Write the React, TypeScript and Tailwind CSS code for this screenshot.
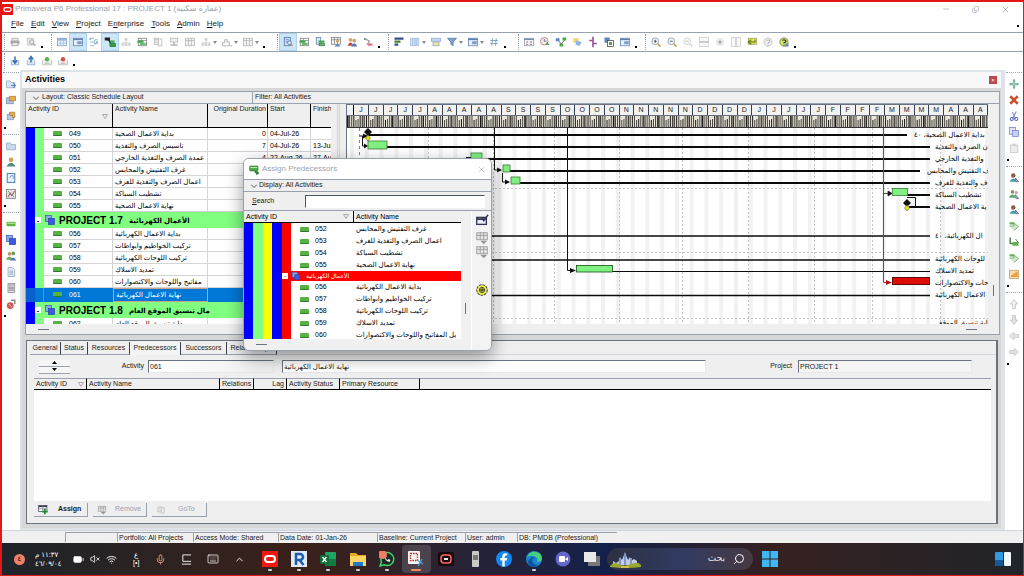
import React from "react";
import { Minus, Copy, X, Wifi, Mic, ChevronUp, Search, VolumeX, Battery, Keyboard } from "lucide-react";

const ink = "#5f7fae";

const glyphs: Record<string, React.ReactNode> = {
  printer: (<><rect x="4" y="3" width="8" height="4" fill="#eee" stroke="#aaa" /><rect x="2" y="6" width="12" height="5" rx="1" fill="#aaa" /><rect x="4" y="9" width="8" height="4" fill="#eee" stroke="#999" /></>),
  preview: (<><rect x="3" y="3" width="8" height="9" fill="#ececec" stroke="#bbb" /><circle cx="9" cy="8" r="3" fill="#dce6f0" stroke="#999" /><path d="M11 10l3 3" stroke="#aaa" strokeWidth="2" /></>),
  grid: (<><rect x="2" y="3" width="12" height="10" fill="#e6f0fb" stroke="#7d9dc4" /><path d="M2 6h12M2 9.500h12M6 3v10M10 3v10" stroke="#a4bddc" /><path d="M2 4h12" stroke="#86a9d6" strokeWidth="2" /></>),
  panel: (<><rect x="2" y="3" width="12" height="10" fill="#e8f1fb" stroke={ink} /><path d="M2 4.500h12" stroke={ink} strokeWidth="2" /><rect x="7" y="7" width="6" height="4" fill="#7b9cc9" /></>),
  network: (<><path d="M3 3h5M3 8h5M3 13h5M9 5v7M9 5h4M9 10h4" stroke="#7c9cc0" fill="none" /><circle cx="3" cy="4" r="1.500" fill="#8fb1d7" /><circle cx="12" cy="8" r="1.500" fill="#8fb1d7" /></>),
  link: (<><rect x="1" y="2" width="7" height="4" fill="#222" /><path d="M4 4q3 1 5 6" stroke="#222" strokeWidth="2" fill="none" /><rect x="8" y="6" width="6" height="3" fill="#39a145" /><rect x="8" y="10" width="7" height="4" fill="#39a145" stroke="#1d6c29" /></>),
  assign: (<><rect x="1" y="3" width="12" height="7" rx="1" fill="#4cae45" stroke="#27732a" /><path d="M2 5h10" stroke="#b5e6ad" strokeWidth="1.500" /><path d="M9 9v4h3M11 10.500l3.500 2.500-3.500 2.500z" fill="#27732a" stroke="#27732a" /></>),
  assignrow: (<><rect x="1" y="2" width="12" height="9" fill="#fff" stroke="#335" /><path d="M1 3.500h12" stroke="#335" strokeWidth="2" /><path d="M1 7h12M7 3v8" stroke="#777" /><path d="M10 7v8M6 11h8" stroke="#1f8a2c" strokeWidth="2.500" /></>),
  tree: (<><rect x="6" y="3" width="4" height="3" fill="#ccc" /><path d="M8 6v3M3 11V9h10v2" stroke="#c4c4c4" fill="none" /><rect x="2" y="10" width="3" height="3" fill="#ccc" /><rect x="6" y="10" width="4" height="3" fill="#ccc" /><rect x="11" y="10" width="3" height="3" fill="#ccc" /></>),
  sheetgreen: (<><rect x="3" y="3" width="11" height="10" fill="#fff" stroke="#777" /><path d="M3 6h11M7 3v10" stroke="#888" /><rect x="2" y="6" width="8" height="3" fill="#3fa34a" /><rect x="5" y="9" width="8" height="3" fill="#69bf6f" /></>),
  pages: (<><rect x="3" y="3" width="6" height="8" fill="#f2f2f2" stroke="#b0b0b0" /><path d="M10 4h3v9H7" stroke="#b0b0b0" fill="none" /><path d="M4 5h4M4 8h4" stroke="#b5b5b5" /></>),
  pagesgreen: (<><rect x="3" y="2" width="6" height="9" fill="#dce9f7" stroke={ink} /><rect x="6" y="6" width="8" height="3" fill="#43a44d" /><rect x="7" y="10" width="7" height="3" fill="#66bc6c" stroke="#37803e" /></>),
  greybox: (<><rect x="3" y="3" width="10" height="5" fill="#eee" stroke="#b5b5b5" /><path d="M8 8v5M3 12h10" stroke="#b5b5b5" strokeWidth="2" /></>),
  greygrid: (<><rect x="2" y="3" width="12" height="10" fill="#f2f2f2" stroke="#b5b5b5" /><path d="M2 6h12M6 3v10M10 3v10" stroke="#b5b5b5" /></>),
  dropgrid: (<><rect x="2" y="2" width="12" height="8" fill="#e6e6e6" stroke="#999" /><path d="M2 5h12M6 2v8M10 2v8" stroke="#999" /><path d="M6 11h8l-4 4z" fill="#999" /></>),
  histogram: (<path d="M2 13V9h3V5h3v3h3v5M1 13h14" stroke="#bbb" strokeWidth="1.500" fill="none" />),
  finddoc: (<><rect x="3" y="2" width="8" height="11" fill="#cfe0f5" stroke="#4a6ea5" /><path d="M5 5h4M5 8h3" stroke="#4a6ea5" /><circle cx="10" cy="9" r="2.500" fill="#eaf3ff" stroke="#41618d" /><path d="M12 11l2 2" stroke="#c09a4e" strokeWidth="2" /></>),
  gridpeople: (<><rect x="2" y="2" width="12" height="9" fill="#fff" stroke="#777" /><path d="M2 5h12M6 2v9M10 2v9" stroke="#777" /><circle cx="10" cy="7" r="2" fill="#d89b55" /><path d="M6 14q4-7 8 0z" fill="#5c86c0" /></>),
  people: (<><circle cx="6" cy="5" r="2.500" fill="#d5a36a" /><path d="M2 13q4-9 8 0z" fill="#c9483d" /><circle cx="11" cy="6" r="2.500" fill="#caa06f" /><path d="M7 14q4-9 8 0z" fill="#4b79b9" /></>),
  role: (<><circle cx="6" cy="5" r="2.500" fill="#b99a6a" /><circle cx="11" cy="4.500" r="2.500" fill="#6c9c55" /><path d="M1 13q5-9 9 0z" fill="#74a85c" /><path d="M6 14q5-8 9 0z" fill="#4b79b9" /></>),
  flow: (<><path d="M3 3l7 4-3 4h5" stroke="#8b9aa8" fill="none" strokeWidth="1.500" /><rect x="8" y="10" width="6" height="3" fill="#d77" /><circle cx="4" cy="4" r="1.500" fill="#6a6" /></>),
  bars: (<><rect x="2" y="2" width="12" height="3" fill="#34548a" /><rect x="2" y="6" width="8" height="3" fill="#50802f" /><rect x="2" y="10" width="5" height="3" fill="#34548a" /></>),
  columns: (<><rect x="2" y="3" width="11" height="10" fill="#dceafa" stroke="#a3bcdc" /><path d="M5 3v10M8 3v10M10.500 3v10" stroke="#89a7cd" /></>),
  group: (<><rect x="2" y="3" width="12" height="4" fill="#c7d9f0" stroke="#89a7cd" /><rect x="4" y="8" width="8" height="5" fill="#f7e2a0" stroke="#89a7cd" /></>),
  filter: (<path d="M2 3h12L9.500 8v5L6.500 11V8z" fill="#7ba3d6" stroke="#56799f" />),
  hash: (<path d="M6 3L5 13M11 3l-1 10M3 6h10M3 10h10" stroke="#7b9cc9" strokeWidth="1.200" />),
  cells: (<><rect x="2" y="3" width="12" height="10" fill="#fff" stroke="#8895a8" /><path d="M2 4.500h12" stroke="#7289b0" strokeWidth="2" /><path d="M4 8h3M9 8h3M4 11h3M9 11h3" stroke="#a56a80" strokeWidth="1.500" /></>),
  clock: (<><circle cx="7" cy="7" r="5" fill="#fbeef0" stroke="#b66a7a" /><path d="M7 4v3h3" stroke="#555" fill="none" /><path d="M8 12h6l-3-4z" fill="#4da552" /></>),
  nodes: (<><path d="M4 5l4 6 5-6" stroke="#555" fill="none" /><rect x="1" y="3" width="5" height="4" fill="#5c86c0" /><rect x="10" y="2" width="5" height="4" fill="#4da552" /><rect x="6" y="10" width="5" height="4" fill="#4da552" /></>),
  star: (<><rect x="3" y="3" width="7" height="6" fill="#f0d36a" /><path d="M7 6l7 2-2 5-6-1z" fill="#8fb4e0" /></>),
  trace: (<><path d="M8 1v14" stroke="#7b4aa0" strokeWidth="2" /><path d="M3 6h5M8 10h5" stroke="#b0418a" strokeWidth="2" /></>),
  stack: (<><rect x="2" y="2" width="7" height="7" fill="#5c86c0" /><rect x="6" y="6" width="8" height="8" fill="#fff" stroke="#444" /><rect x="8" y="8" width="4" height="4" fill="#4da552" /></>),
  zoomin: (<><circle cx="7" cy="7" r="4.500" fill="#f3f7fb" stroke="#7c8ea3" /><path d="M5 7h4M7 5v4" stroke="#333" /><path d="M10.500 10.500L14 14" stroke="#d8a957" strokeWidth="2.500" /></>),
  zoomout: (<><circle cx="7" cy="7" r="4.500" fill="#f3f7fb" stroke="#7c8ea3" /><path d="M5 7h4" stroke="#333" /><path d="M10.500 10.500L14 14" stroke="#d8a957" strokeWidth="2.500" /></>),
  zoomgrey: (<><circle cx="7" cy="7" r="4.500" fill="#f5f5f5" stroke="#ccc" /><path d="M5 7h4M10.500 10.500L14 14" stroke="#ccc" strokeWidth="1.500" /></>),
  split: (<><rect x="2" y="2" width="12" height="12" fill="#f8f8f8" stroke="#ccc" /><path d="M2 8h12" stroke="#aaa" strokeWidth="1.500" /></>),
  dotgrey: (<><circle cx="8" cy="8" r="5" fill="#e5e5e5" /><circle cx="8" cy="8" r="2" fill="#aaa" /></>),
  splitv: (<><rect x="2" y="2" width="12" height="12" fill="#f8f8f8" stroke="#ccc" /><path d="M8 2v12" stroke="#bbb" strokeWidth="1.500" /></>),
  back: (<><rect x="3" y="3" width="11" height="8" fill="#d7e06a" stroke="#9aa33c" /><path d="M12 5v3H4M7 5L3 8l4 3" stroke="#6b7a1c" strokeWidth="1.500" fill="none" /></>),
  helpgrey: (<><circle cx="8" cy="8" r="5.500" fill="#eee" stroke="#bbb" /><path d="M6 6q2-2 4 0t-2 3v1M8 11.500v1" stroke="#999" fill="none" /></>),
  help: (<><circle cx="8" cy="8" r="5.500" fill="#dfe85a" stroke="#4d6b50" /><path d="M6 6q2-2 4 0t-2 3v1M8 11.500v1" stroke="#224" strokeWidth="1.500" fill="none" /><path d="M10 10h4v4h-4z" fill="#5c86c0" /></>),
  helpyellow: (<><circle cx="8" cy="8" r="6" fill="#f1f04a" stroke="#444" strokeWidth="1.200" strokeDasharray="3 1" /><circle cx="8" cy="8" r="3" fill="none" stroke="#333" /><path d="M5 8h6M8 6v4" stroke="#222" strokeWidth="1.200" /></>),
  importb: (<><path d="M3 7v6h10V7" fill="#dbe7f4" stroke="#8aa4c4" /><path d="M8 2v8M5 7l3 4 3-4" stroke="#3a6fb7" strokeWidth="2" fill="none" /></>),
  exportb: (<><path d="M3 7v6h10V7" fill="#dbe7f4" stroke="#8aa4c4" /><path d="M8 10V2M5 6l3-4 3 4" stroke="#3a6fb7" strokeWidth="2" fill="none" /></>),
  importg: (<><path d="M2 7v6h12V7" fill="#eee" stroke="#b5b5b5" /><circle cx="8" cy="5.500" r="3" fill="#5fae50" /><path d="M5 11h6" stroke="#8ab57f" /></>),
  exportr: (<><path d="M2 7v6h12V7" fill="#eee" stroke="#b5b5b5" /><circle cx="8" cy="5.500" r="3" fill="#cf5548" /><path d="M5 11h6" stroke="#c98c80" /></>),
  folder: (<path d="M2 4h5l1 2h6v7H2z" fill="#c9d8ec" stroke="#92a9c8" />),
  folderadd: (<><path d="M2 4h5l1 2h5v7H2z" fill="#dbe5f2" stroke="#92a9c8" /><path d="M8 10h6M11 7l3 3-3 3" stroke="#5c86c0" fill="none" strokeWidth="1.500" /></>),
  book: (<><rect x="2" y="5" width="9" height="8" fill="#aebfda" stroke="#7e93b5" /><rect x="6" y="3" width="8" height="6" fill="#e9a94f" stroke="#b77f33" /></>),
  report: (<><rect x="3" y="6" width="8" height="7" fill="#b9c9df" stroke="#7e93b5" /><path d="M6 3h7v7h-3V7H6z" fill="#e3b05d" stroke="#a6762c" /></>),
  user: (<><circle cx="8" cy="5" r="3" fill="#dc9a4a" /><path d="M2 14q6-10 12 0z" fill="#4f8a7c" /></>),
  notebook: (<><rect x="3" y="2" width="10" height="12" fill="#e9f2fc" stroke="#5b88bf" strokeWidth="1.500" /><path d="M6 8l2-3h3v4" stroke="#5b88bf" fill="none" /></>),
  chart: (<><rect x="2" y="2" width="12" height="12" fill="#e4e4e4" stroke="#777" /><path d="M4 12l3-5 2 3 4-6" stroke="#b35a5a" fill="none" strokeWidth="1.500" /><path d="M4 4l8 8" stroke="#777" /></>),
  activity: (<><rect x="2" y="5" width="12" height="6" rx="1" fill="#63b23f" /><rect x="3" y="6" width="10" height="2" fill="#a7dc8a" /></>),
  wbs: (<><rect x="2" y="2" width="8" height="8" fill="#8fa9e6" stroke="#3d5cb8" /><rect x="6" y="6" width="8" height="8" fill="#3a5be0" stroke="#2c47a8" /></>),
  page: (<><path d="M4 2h6l3 3v9H4z" fill="#dfe8f3" stroke="#8ea4c1" /><path d="M6 7h5M6 9h5M6 11h5" stroke="#8ea4c1" /></>),
  calc: (<><rect x="4" y="2" width="9" height="12" fill="#e2e2ea" stroke="#888" /><path d="M5 4h7M5 7h7M5 9h7M5 11h7" stroke="#777" /></>),
  risk: (<><circle cx="7" cy="10" r="4.500" fill="#cc5a52" /><path d="M8 3h5v5" stroke="#888" strokeWidth="2" fill="none" /><path d="M5 8l4 4" stroke="#fff" /></>),
  plus: (<><path d="M8 2v12M2 8h12" stroke="#5aa08b" strokeWidth="3" /><path d="M8 3v10M3 8h10" stroke="#cfe6df" /></>),
  delete: (<path d="M3 3l10 10M13 3L3 13" stroke="#c8502e" strokeWidth="3.500" />),
  cut: (<><path d="M6 12L11 2M10 12L6 3" stroke="#7f8fd0" strokeWidth="1.500" /><circle cx="5" cy="12" r="2" fill="none" stroke="#5d6fc4" strokeWidth="1.500" /><circle cx="11" cy="12" r="2" fill="none" stroke="#5d6fc4" strokeWidth="1.500" /></>),
  copy: (<><rect x="2" y="2" width="8" height="9" fill="#dbe2fa" stroke="#7485cf" /><rect x="6" y="6" width="8" height="8" fill="#c6d1f5" stroke="#7485cf" /></>),
  paste: (<><rect x="3" y="4" width="10" height="10" fill="#ececec" stroke="#c5c5c5" /><rect x="6" y="2" width="4" height="3" fill="#ccc" /></>),
  userassign: (<><circle cx="7" cy="4.500" r="3" fill="#8a5f45" /><path d="M2 13q5-9 10 0z" fill="#3d9db0" /><path d="M10 8l4 5h-3z" fill="#fff" stroke="#446" /></>),
  usergreen: (<><circle cx="6" cy="5" r="2.500" fill="#9b8b6f" /><path d="M1 13q5-9 10 0z" fill="#59a868" /><circle cx="11" cy="6" r="2" fill="#c4a0a8" /><path d="M10 9l4 5h-3z" fill="#fff" stroke="#446" /></>),
  pred: (<><path d="M2 8h6V4l6 5-6 5" fill="#cfe8c9" stroke="#5aa050" /><path d="M2 3h6v3H2z" fill="#5fb04f" /></>),
  succ: (<><path d="M3 2v8h8" stroke="#4c8b45" strokeWidth="2" fill="none" /><rect x="6" y="8" width="8" height="5" fill="#5fb04f" /><path d="M10 4l4 5" stroke="#446" /></>),
  steps: (<><rect x="2" y="3" width="12" height="11" fill="#f6ddb8" stroke="#c79a62" /><path d="M4 12v-3h3V7h3V5h3v7z" fill="#f0a040" /></>),
  up: (<path d="M8 2l5 6h-3v6H6V8H3z" fill="#f2f2f2" stroke="#bcbcbc" />),
  down: (<path d="M8 14l5-6h-3V2H6v6H3z" fill="#e2e6e2" stroke="#bcbcbc" />),
  left: (<path d="M2 8l6-5v3h6v4H8v3z" fill="#dfe3df" stroke="#c4c4c4" />),
  right: (<path d="M14 8L8 3v3H2v4h6v3z" fill="#dfe3df" stroke="#c4c4c4" />),
  assignbox: (<><rect x="2" y="5" width="11" height="8" fill="#eef" stroke="#335" strokeWidth="1.500" /><path d="M2 7h10" stroke="#335" strokeWidth="2" /><path d="M8 6l2 3 5-7" stroke="#335" strokeWidth="1.500" fill="none" /></>),
};

function Glyph({ name, className = "size-3" }: { name: string; className?: string }) {
  return (
    <svg viewBox="0 0 16 16" className={className} aria-hidden="true">
      {glyphs[name]}
    </svg>
  );
}

function Tool({ name, active, menu }: { name: string; active?: boolean; menu?: boolean }) {
  return (
    <button
      aria-label={name}
      className={`flex h-4 shrink-0 items-center justify-center ${menu ? "w-[21px]" : "w-4"} ${active ? "bg-[#cde6f7] outline outline-[#a9d3ef]" : ""}`}
    >
      <Glyph name={name} />
      {menu && <svg viewBox="0 0 4 3" className="ml-px h-[3px] w-1"><path d="M0 0h4L2 3z" fill="#888" /></svg>}
    </button>
  );
}

const toolGroups: { end: string; items: [string, string?][] }[] = [
  { end: "w-3", items: [["printer"], ["preview"]] },
  { end: "w-4", items: [["grid"], ["panel", "on"], ["network"], ["link", "on"], ["tree"], ["sheetgreen"], ["pages"], ["greybox"], ["greygrid"], ["tree", "menu"], ["histogram", "menu"], ["greygrid", "menu"]] },
  { end: "w-3", items: [["finddoc", "on"], ["sheetgreen"], ["pagesgreen"], ["gridpeople"], ["people"], ["flow"]] },
  { end: "w-4", items: [["bars"], ["columns", "menu"], ["group"], ["filter", "menu"], ["panel", "menu"], ["hash"]] },
  { end: "w-3", items: [["cells"], ["clock"], ["nodes"], ["star"], ["trace"], ["stack"], ["panel"]] },
  { end: "w-3", items: [["zoomin"], ["zoomout"], ["zoomgrey"], ["split"], ["dotgrey"], ["splitv"], ["back"], ["helpgrey"], ["help"]] },
];

const leftTools = [
  ["folderadd", "book", "report"],
  ["folder", "user", "notebook", "chart"],
  ["activity", "wbs", "role", "page", "calc", "risk"],
];
const rightTools = [
  ["plus", "delete", "cut", "copy", "paste"],
  ["userassign", "usergreen", "userassign", "pred", "succ", "pred", "steps"],
  ["up", "down", "left", "right"],
];

function SideBar({ groups, label }: { groups: string[][]; label: string }) {
  return (
    <nav aria-label={label} className="flex w-[18px] shrink-0 flex-col bg-white">
      {groups.map((g, i) => (
        <div key={i} className="flex flex-col items-center pt-[2px]">
          <span className="w-4 border-t border-dotted border-gray-400" />
          <div className="flex flex-col items-center pt-[3px]">
            {g.map((n, j) => (
              <button key={j} aria-label={n} className="flex size-4 items-center justify-center"><Glyph name={n} /></button>
            ))}
          </div>
          <span className="my-[3px] mr-3 size-[2px] bg-black" />
        </div>
      ))}
    </nav>
  );
}

type Row = { id: string; name: string; dur?: string; start?: string; finish?: string };
const rowsA: Row[] = [
  { id: "049", name: "بداية الاعمال الصحية", dur: "0", start: "04-Jul-26" },
  { id: "050", name: "تاسيس الصرف والتغذية", dur: "7", start: "04-Jul-26", finish: "13-Jul-26" },
  { id: "051", name: "عمدة الصرف والتغذية الخارجي", dur: "4", start: "22-Aug-26", finish: "27-Aug-26" },
  { id: "052", name: "غرف التفتيش والمحابس" },
  { id: "053", name: "اعمال الصرف والتغذية للغرف" },
  { id: "054", name: "تشطيب السباكة" },
  { id: "055", name: "نهاية الاعمال الصحية" },
];
const rowsB: Row[] = [
  { id: "056", name: "بداية الاعمال الكهربائية" },
  { id: "057", name: "تركيب الخواطيم وابواطات" },
  { id: "058", name: "تركيب اللوحات الكهربائية" },
  { id: "059", name: "تمديد الاسلاك" },
  { id: "060", name: "مفاتيح واللوحات والاكتصوارات" },
];

function Bar() {
  return <span className="h-[5px] w-[9px] shrink-0 rounded-[1px] border-b border-[#2f7a26] bg-[#58b144]" />;
}

function ActivityRow({ row, selected }: { row: Row; selected?: boolean }) {
  const line = selected ? "border-[#0078d7]" : "border-[#d4d4d4]";
  return (
    <tr className={selected ? "h-[14px] bg-[#0078d7] text-white" : "h-3 bg-white text-black"}>
      <td className={selected ? "bg-[#0a5fd0]" : "bg-[#0000ff]"} />
      <td className={selected ? "border-r border-[#3d9be6] bg-[#0078d7]" : "bg-[#80ff80]"} />
      <td className={`border-r border-b ${line}`}>
        <div className="flex items-center gap-[7px] pl-[9px]"><Bar />{row.id}</div>
      </td>
      <td className={`overflow-hidden border-r border-b pl-[2px] ${selected ? "border border-[#d0a080]" : line}`}>{row.name}</td>
      <td className={`border-r border-b pr-px text-right ${line}`}>{row.dur}</td>
      <td className={`border-r border-b pl-[2px] ${line}`}>{row.start}</td>
      <td className={`overflow-hidden border-b pl-[2px] ${line}`}>{row.finish}</td>
    </tr>
  );
}

function GroupRow({ code, name }: { code: string; name: string }) {
  return (
    <tr className="h-4 bg-[#80ff80] text-black">
      <td className="bg-[#0000ff]" />
      <td colSpan={6}>
        <div className="flex items-center text-[10px] leading-[15px] font-bold whitespace-pre">
          <span className="flex size-[6px] items-center justify-center bg-white text-[7px] leading-none">-</span>
          <Glyph name="wbs" className="mx-[3px] size-3" />
          {code}
          <span className="ml-[6px] text-[7px]">{name}</span>
        </div>
      </td>
    </tr>
  );
}

const weeks = "JJJJJAAAAASSSSOOOONNNNNDDDDJJJJJFFFFMMMMAAA".split("");

const chartLines: [number, number, number, number][] = [
  [367, 135, 906, 2], [386, 147, 929, 2], [481, 159, 929, 2], [508, 171, 919, 2], [519, 183, 929, 2],
  [906, 195, 929, 2], [908, 207, 929, 2], [346, 236, 929, 1.5], [346, 260, 929, 1.5], [611, 271.5, 929, 1], [346, 295.5, 929, 1.5],
];
const chartLabels: [number, number, string][] = [
  [913, 137, "بداية الاعمال الصحية، ٤٠"],
  [934, 149, "ن الصرف والتغذية"],
  [934, 161, "والتغذية الخارجي"],
  [926, 173, "رف التفتيش والمحابس"],
  [934, 185, "ف والتغذية للغرف"],
  [934, 197, "تشطيب السباكة"],
  [934, 209, "ية الاعمال الصحية"],
  [934, 238, "ال الكهربائية، ٤٠"],
  [934, 261, "للوحات الكهربائية"],
  [934, 273, "تمديد الاسلاك"],
  [934, 285, "حات والاكتصوارات"],
  [934, 297, "الاعمال الكهربائية"],
  [938, 325, "بداية تنسيق الموقع"],
];

function Gantt() {
  return (
    <div className="flex min-w-0 flex-1 flex-col overflow-hidden border-l border-gray-500 bg-white">
      <div className="flex h-3 items-stretch border-y border-gray-500 bg-[#f2f2f2] text-[7px] leading-[10px]">
        <span className="w-[7px] border-r border-black" />
        {weeks.map((w, i) => (
          <span key={i} className="min-w-0 flex-1 border-r border-gray-700 text-center">{w}</span>
        ))}
      </div>
      <svg viewBox="0 0 641 12" preserveAspectRatio="none" className="h-3 w-full shrink-0 bg-[#e9e5da]" aria-hidden="true">
        {Array.from({ length: 304 }, (_, i) => (
          <rect key={i} x={i * 2.11} y={i % 7 === 4 ? 4 : i % 7 === 5 ? 3 : 0} width={i % 7 === 0 ? 1.6 : 1} height="12" fill={i % 3 === 0 ? "#1a1a1a" : "#4a453f"} />
        ))}
        <path d="M0 11.500h641" stroke="#333" />
      </svg>
      <svg viewBox="346 128 641 196" className="w-full" role="img" aria-label="Gantt chart">
        {Array.from({ length: 44 }, (_, i) => (
          <rect key={i} x={349 + i * 14.77} y="128" width="4" height="196" fill="#f2f2f2" />
        ))}
        <g stroke="#c4c4c4" strokeDasharray="2 2" fill="none">
          <path d="M346 188.500H987M346 252.500H987M346 318.500H987" />
          <path d="M427.500 128V324M492.500 128V324M553.500 128V324M618.500 128V324M681.500 128V324M747.500 128V324M813.500 128V324M871.500 128V324M939.500 128V324" />
        </g>
        <path d="M358.500 128V324" stroke="#e06060" strokeDasharray="3 3" />
        {chartLines.map(([x, y, x2, h], i) => (
          <path key={i} d={`M${x} ${y}H${x2}`} stroke="#0a0a0a" strokeWidth={h} />
        ))}
        <g stroke="#111" fill="none">
          <path d="M493.500 128V170H500M501.500 173V182H508M566.500 128V270.500H574" />
          <path d="M359 136H366M361.500 136V146H366M906 197.500H914.500V207.500H909M470 157.500H465" />
        </g>
        <g fill="#111">
          <path d="M496 167.500v5l5-2.500zM504 179.500v5l5-2.500zM569 268v5l6-2.500zM363 143.500v5l4-2.500zM362 133.500v5l5-2.500z" />
          <path d="M367 128l4 4-4 4-4-4zM906 199l4 4-4 4-4-4z" />
        </g>
        <path d="M367 135l2.500 3-2.500 3-2.500-3zM906 205l2.500 3-2.500 3-2.500-3z" fill="#e6e600" stroke="#555" strokeWidth=".6" />
        <g fill="#80f080" stroke="#3b7a35" strokeWidth=".8">
          <rect x="367" y="141" width="19" height="8" />
          <rect x="470" y="153" width="11" height="8" />
          <rect x="502" y="165" width="7" height="7" />
          <rect x="510" y="177" width="9" height="7" />
          <rect x="575.500" y="265.500" width="36" height="6.500" stroke="#174d17" />
          <rect x="891.500" y="188.500" width="15" height="7" />
        </g>
        <path d="M882.500 128V282.500H887" stroke="#d02030" fill="none" />
        <path d="M885 280v5l6-2.500z" fill="#b01020" />
        <path d="M883 193.500H889M887 191v5l4-2.500z" stroke="#222" strokeWidth=".8" />
        <rect x="891.500" y="277.500" width="37" height="7" fill="#dd0c06" stroke="#5c0a06" />
        {chartLabels.map(([x, y, t], i) => (
          <text key={i} x={x} y={y} className="text-[7px]" fill="#000">{t}</text>
        ))}
      </svg>
    </div>
  );
}

function Sort() {
  return <svg viewBox="0 0 6 5" className="h-[5px] w-[6px]"><path d="M.5.500h5L3 4.500z" fill="none" stroke="#aaa" /></svg>;
}

function ActivitiesTable() {
  const th = "border-r border-b border-black pl-[2px] text-left align-top font-normal";
  return (
    <table className="w-[305px] shrink-0 table-fixed border-separate border-spacing-0 text-[7px] leading-[10px] whitespace-nowrap">
      <colgroup>
        <col className="w-[9px]" /><col className="w-[9px]" /><col className="w-[69px]" /><col className="w-[95px]" /><col className="w-[60px]" /><col className="w-[43px]" /><col className="w-5" />
      </colgroup>
      <thead>
        <tr className="h-6 bg-[#efefef]">
          <th colSpan={3} className={th}><div>Activity ID</div><div className="flex justify-end pr-1"><Sort /></div></th>
          <th className={th}>Activity Name</th>
          <th className="border-r border-b border-black pr-px text-right align-top font-normal">Original Duration</th>
          <th className={th}>Start</th>
          <th className="overflow-hidden border-b border-black pl-[2px] text-left align-top font-normal">Finish</th>
        </tr>
      </thead>
      <tbody>
        {rowsA.map((r) => <ActivityRow key={r.id} row={r} />)}
        <GroupRow code="PROJECT 1.7" name="الأعمال الكهربائية" />
        {rowsB.map((r) => <ActivityRow key={r.id} row={r} />)}
        <ActivityRow row={{ id: "061", name: "نهاية الاعمال الكهربائية" }} selected />
        <GroupRow code="PROJECT 1.8" name="مال تنسيق الموقع العام" />
        <ActivityRow row={{ id: "062", name: "بداية تنسيق الموقع العام" }} />
      </tbody>
    </table>
  );
}

const dialogRows: Row[] = [
  { id: "052", name: "غرف التفتيش والمحابس" },
  { id: "053", name: "اعمال الصرف والتغذية للغرف" },
  { id: "054", name: "تشطيب السباكة" },
  { id: "055", name: "نهاية الاعمال الصحية" },
  { id: "", name: "الأعمال الكهربائية" },
  { id: "056", name: "بداية الاعمال الكهربائية" },
  { id: "057", name: "تركيب الخواطيم وابواطات" },
  { id: "058", name: "تركيب اللوحات الكهربائية" },
  { id: "059", name: "تمديد الاسلاك" },
  { id: "060", name: "يل المفاتيح واللوحات والاكتصوارات" },
];

function Strips() {
  return (
    <>
      <td className="bg-[#0000ff]" /><td className="bg-[#80ff80]" /><td className="bg-[#ffff00]" /><td className="bg-[#0000ff]" />
    </>
  );
}

function AssignDialog() {
  return (
    <div role="dialog" aria-label="Assign Predecessors" className="absolute top-[156px] left-[241px] flex w-[249px] flex-col overflow-hidden rounded-md border border-gray-400 bg-[#f0f0f0] shadow-[0_6px_18px_rgba(0,0,0,0.4)]">
      <div className="flex h-5 items-center gap-[2px] bg-white px-[5px] text-[8px] text-gray-400">
        <Glyph name="assign" className="size-[11px]" />
        <span className="flex-1">Assign Predecessors</span>
        <button aria-label="Close"><X className="size-[9px]" strokeWidth={1.5} /></button>
      </div>
      <div className="flex h-[13px] items-center gap-[2px] border-y border-gray-400 pl-[7px] text-[7px]">
        <svg viewBox="0 0 6 4" className="h-1 w-[6px]"><path d="M0 .500l3 3 3-3" fill="none" stroke="#555" /></svg>
        Display: All Activities
      </div>
      <div className="flex h-[19px] items-center border-b border-gray-400 pr-[6px] pl-2 text-[7px]">
        <label htmlFor="find" className="w-[53px]"><u>S</u>earch</label>
        <input id="find" className="h-[13px] min-w-0 flex-1 border border-white border-t-gray-600 border-l-gray-600 bg-white px-1 text-[7px]" />
      </div>
      <div className="flex">
        <div className="w-[217px]">
          <div className="h-[128px] overflow-hidden">
            <table className="w-full table-fixed border-separate border-spacing-0 text-[7px] leading-[10px] whitespace-nowrap text-black">
              <colgroup>
                <col className="w-[9px]" /><col className="w-[10px]" /><col className="w-[9px]" /><col className="w-[10px]" /><col className="w-[9px]" /><col className="w-[63px]" /><col />
              </colgroup>
              <thead>
                <tr className="h-3 bg-[#efefef]">
                  <th colSpan={6} className="border-r border-b border-black pr-1 pl-[2px] font-normal"><div className="flex items-center justify-between">Activity ID<Sort /></div></th>
                  <th className="border-b border-black pl-[2px] text-left font-normal">Activity Name</th>
                </tr>
              </thead>
              <tbody>
                {dialogRows.map((r, i) => r.id ? (
                  <tr key={i} className="h-3 bg-white">
                    <Strips />
                    <td className="bg-[#ff0000]" />
                    <td><div className="flex items-center gap-[6px] pl-[9px]"><Bar />{r.id}</div></td>
                    <td className="overflow-hidden pl-[2px]">{r.name}</td>
                  </tr>
                ) : (
                  <tr key={i} className="h-[10px] bg-[#ff0000] text-white">
                    <Strips />
                    <td colSpan={3}>
                      <div className="flex h-[10px] items-center gap-[3px] text-[6px]">
                        <span className="flex size-[6px] items-center justify-center bg-white leading-none text-black">-</span>
                        <Glyph name="wbs" className="size-[10px]" />
                        <span className="ml-[2px]">{r.name}</span>
                      </div>
                    </td>
                  </tr>
                ))}
              </tbody>
            </table>
          </div>
          <div className="flex h-[11px] items-center pl-3"><span className="h-px w-[11px] bg-gray-500" /></div>
        </div>
        <div className="flex flex-1 items-end pb-9 pl-1"><span className="h-[11px] w-px bg-gray-500" /></div>
        <div className="flex w-5 flex-col items-center border-l border-white bg-[#f3f3f3] pt-[2px]">
          <button aria-label="Assign"><Glyph name="assignbox" className="size-[14px]" /></button>
          <button aria-label="Group" className="mt-1"><Glyph name="dropgrid" className="size-[14px]" /></button>
          <button aria-label="Sort"><Glyph name="dropgrid" className="size-[14px]" /></button>
          <button aria-label="Help" className="mt-6"><Glyph name="helpyellow" className="size-[14px]" /></button>
        </div>
      </div>
    </div>
  );
}

const tabs = [
  ["General", "w-[31px]"], ["Status", "w-[27px]"], ["Resources", "w-[42px]"], ["Predecessors", "w-[51px]"], ["Successors", "w-[46px]"], ["Relationships", "w-[50px]"],
];

function Details() {
  const field = "h-[13px] border border-[#e8e8e8] border-t-gray-500 border-l-gray-500 px-[1px] text-[7px]";
  const th = "border-r border-black px-[2px] text-left font-normal";
  return (
    <section className="mr-[3px] ml-1 flex flex-1 flex-col border-t border-r-2 border-b border-l border-gray-500 bg-[#efefef] text-[7px]">
      <div role="tablist" className="flex h-[14px] items-end pl-[3px]">
        {tabs.map(([t, w]) => (
          <button key={t} role="tab" className={`h-[13px] border-r whitespace-nowrap ${w} ${t === "Predecessors" ? "border-gray-700 bg-[#f4f4f4]" : "border-b border-gray-700 border-b-gray-400"}`}>{t}</button>
        ))}
        <span className="h-[13px] flex-1 border-b border-gray-300" />
      </div>
      <div className="flex h-[23px] items-center">
        <div className="ml-3 flex w-[31px] flex-col">
          <button aria-label="Previous" className="flex h-[7px] items-center justify-center border-b border-gray-400 bg-[#f6f6f6]"><svg viewBox="0 0 5 3" className="h-[3px] w-[5px]"><path d="M0 3h5L2.500 0z" /></svg></button>
          <button aria-label="Next" className="flex h-[7px] items-center justify-center border-b border-gray-400 bg-[#f6f6f6]"><svg viewBox="0 0 5 3" className="h-[3px] w-[5px]"><path d="M0 0h5L2.500 3z" /></svg></button>
        </div>
        <label htmlFor="act" className="w-[78px] pr-1 text-right">Activity</label>
        <input id="act" defaultValue="061" className={`${field} w-[126px] bg-linear-to-r from-white to-[#efefef]`} />
        <input aria-label="Activity name" defaultValue="نهاية الاعمال الكهربائية" className={`${field} ml-2 min-w-0 flex-1 bg-white`} />
        <label htmlFor="proj" className="w-[92px] pr-[6px] text-right">Project</label>
        <input id="proj" defaultValue="PROJECT 1" className={`${field} mr-6 w-[174px] bg-[#f4f4f4]`} />
      </div>
      <div className="mr-[5px] ml-[7px] flex flex-1 flex-col bg-white">
        <table className="w-full table-fixed border-separate border-spacing-0 leading-[10px]">
          <colgroup>
            <col className="w-[53px]" /><col className="w-[133px]" /><col className="w-[34px]" /><col className="w-[33px]" /><col className="w-[53px]" /><col className="w-[80px]" /><col />
          </colgroup>
          <thead>
            <tr className="h-3 bg-[#efefef] [&>th]:border-t [&>th]:border-b [&>th]:border-t-gray-400 [&>th]:border-b-black">
              <th className={th}><div className="flex items-center justify-between">Activity ID<Sort /></div></th>
              <th className={th}>Activity Name</th>
              <th className={th}>Relations</th>
              <th className="border-r border-black px-[2px] text-right font-normal">Lag</th>
              <th className={th}>Activity Status</th>
              <th className={th}>Primary Resource</th>
              <th aria-label="More" />
            </tr>
          </thead>
        </table>
      </div>
      <div className="flex h-[22px] items-center gap-[5px] pl-[7px] pb-1">
        <button className="flex h-[14px] w-[54px] items-center gap-[9px] border-r border-b border-gray-400 pl-1 text-[7px] font-bold"><Glyph name="assignrow" className="size-[11px]" />Assign</button>
        <button className="flex h-[14px] w-[54px] items-center gap-2 border-r border-b border-gray-400 pl-1 text-[7px] text-gray-400"><Glyph name="dropgrid" className="size-[10px]" />Remove</button>
        <button className="flex h-[14px] w-[55px] items-center gap-3 border-r border-b border-gray-400 pl-1 text-[7px] text-gray-400"><Glyph name="pages" className="size-[10px]" />GoTo</button>
      </div>
    </section>
  );
}

const apps: Record<string, React.ReactNode> = {
  Oracle: (<><rect width="16" height="16" fill="#f01810" /><rect x="3" y="5" width="10" height="6" rx="3" fill="none" stroke="#fff" strokeWidth="2" /></>),
  Revit: (<><rect width="16" height="16" fill="#dfeaf6" /><path d="M5 14V3h4a3 3 0 010 6H5M8.500 9l4 5" fill="none" stroke="#1d5caa" strokeWidth="2.500" /></>),
  Excel: (<><rect x="5" y="1" width="11" height="14" rx="1" fill="#21a366" /><rect x="5" y="8" width="11" height="7" fill="#107c41" /><rect x="0" y="4" width="9" height="9" rx="1" fill="#0f6b38" /><path d="M2.500 6l4 5M6.500 6l-4 5" stroke="#fff" strokeWidth="1.300" /></>),
  Explorer: (<><path d="M0 2h6l2 2h8v11H0z" fill="#e8a91c" /><rect y="5" width="16" height="10" fill="#fcd462" /><path d="M3 15v-4h10v4z" fill="#1f78d0" /></>),
  WhatsApp: (<><path d="M1 15l1.500-4A6.500 6.500 0 118 14.500a7 7 0 01-3-.8z" fill="#1a2b20" stroke="#3fd26a" strokeWidth="1.500" /><path d="M5.500 5q0 5 5 6l1-2-2-1-1 1q-1.500-.5-2-2l1-1-.8-2z" fill="#eee" /><circle cx="3.500" cy="3.500" r="4.500" fill="#ef7c66" /></>),
  Snip: (<><rect x="0" y="0" width="12" height="13" rx="1" fill="#f5f5f5" /><rect x="2.500" y="2.500" width="7" height="7" fill="none" stroke="#c22" strokeWidth="1.300" strokeDasharray="1.500 1" /><path d="M10 15l4-7M15 13L9 9" stroke="#4a9fe0" strokeWidth="1.500" /></>),
  Recorder: (<><rect y="1" width="16" height="14" rx="2" fill="#16090b" /><rect x="3" y="4" width="10" height="8" rx="3" fill="none" stroke="#f66" strokeWidth="1.500" /><path d="M6 7h4v2H6z" fill="#eee" /></>),
  Phone: (<><rect x="5" y="0" width="7" height="16" rx="1" fill="#c9c9c9" /><rect x="6" y="4" width="5" height="5" fill="#777" /></>),
  Facebook: (<><circle cx="8" cy="8" r="8" fill="#1387f2" /><path d="M8.700 15.500V9.500h2.200l.4-2.400H8.700V5.700q0-1.200 1.300-1.200h1.200V2.500Q6.300 1.500 6.300 5.200v1.900H4.300v2.400h2v6z" fill="#fff" /></>),
  Edge: (<><circle cx="8" cy="8" r="8" fill="#1b84d0" /><path d="M1 6Q4 0 10 1t6 7q-1 3-5 3 2-4-3-6-4-1-7 1z" fill="#46d07c" /><path d="M6 9q0 5 6 5-4 3-8 0T4 8q2-3 5-1-3 0-3 2z" fill="#0c4e9c" /></>),
  Chat: (<><circle cx="8" cy="8" r="7.500" fill="#6466c8" /><rect x="4" y="5" width="6" height="6" rx="1" fill="#fff" /><path d="M10 8l3-2v4z" fill="#fff" /></>),
  "Task view": (<><rect x="4" y="5" width="12" height="10" fill="#777" /><rect x="0" y="1" width="12" height="10" fill="#e9e9e9" /></>),
};
const running = ["Oracle", "Revit", "Excel", "Explorer", "WhatsApp", "Edge"];

function Taskbar() {
  return (
    <footer className="flex h-8 shrink-0 items-center text-white">
      <div className="flex h-full flex-1 items-center bg-linear-to-r from-[#1d2429] from-0% via-[#3a2019] via-50% to-[#14204a]">
        <div className="flex w-[68px] items-center gap-[10px] pl-3">
          <span className="flex size-[11px] shrink-0 items-center justify-center rounded-full bg-[#f0806a] text-[7px] text-black">٤</span>
          <div className="text-[7px] leading-[9px] whitespace-nowrap"><div dir="rtl" className="text-left">١١:٣٧ م</div><div>٤٦/٠٩/٠٤</div></div>
        </div>
        <div className="flex w-[50px] items-center justify-around">
          <Battery className="size-[11px] fill-white" /><VolumeX className="size-[10px]" /><Wifi className="size-[11px]" />
        </div>
        <div className="flex w-[135px] items-center justify-between pr-[10px] pl-[13px]">
          <div className="text-center text-[7px] leading-[8px]"><div>ع</div><div>[•]</div></div>
          <Mic className="size-[11px] text-[#e09a80]" />
          <svg viewBox="0 0 12 12" className="size-[11px]" fill="none" stroke="#fff"><path d="M11 1H2v7h9M1 11h10" /></svg>
          <Keyboard className="size-3" strokeWidth={1.5} />
          <ChevronUp className="size-[11px]" />
        </div>
        <div className="flex h-full w-[352px] items-center">
          {Object.entries(apps).map(([n, art]) => (
            <button key={n} aria-label={n} className={`flex h-[28px] flex-1 flex-col items-center justify-center gap-[2px] rounded ${n === "Snip" ? "bg-white/15" : ""}`}>
              <svg viewBox="0 0 16 16" className="mt-[3px] size-4">{art}</svg>
              <span className={`h-[2px] rounded ${n === "Snip" ? "w-[10px] bg-[#f08a68]" : running.includes(n) ? "w-1 bg-gray-300" : "w-1"}`} />
            </button>
          ))}
        </div>
      </div>
      <div className="flex h-full flex-1 items-center bg-linear-to-r from-[#14204a] via-[#35201f] via-40% to-[#20242a]">
        <div className="flex h-[22px] w-[146px] items-center rounded-full bg-linear-to-r from-[#2c3140] via-[#313a62] to-[#463a44] pr-2">
          <svg viewBox="0 0 36 20" className="h-5 w-9"><path d="M6 16v-4l3 2 3-2 1-4 2 3 2-5 1-3 1 3 2 5 2-3 1 4 3-2 3 2v4z" fill="#c3cce2" /><path d="M12 16V9h2v7M17 16V5h2v11M23 16V9h2v7" fill="#7f93cf" /><path d="M3 17q4-5 9-2t12 0 10 1v2q-15 2-31 0z" fill="#9aa832" /><path d="M14 17h8v2h-8z" fill="#d6c24a" /></svg>
          <span className="flex-1 text-right text-[9px] text-gray-200">بحث</span>
          <Search className="ml-2 size-3 -scale-x-100" />
        </div>
        <button aria-label="Start" className="ml-[9px]"><svg viewBox="0 0 16 16" className="size-4" fill="#3fb8f4"><path d="M0 0h7.500v7.500H0zM8.500 0H16v7.500H8.500zM0 8.500h7.500V16H0zM8.500 8.500H16V16H8.500z" /></svg></button>
        <button aria-label="Widgets" className="mr-3 ml-auto"><svg viewBox="0 0 16 14" className="h-[14px] w-4"><rect width="8" height="14" rx="1" fill="#2f9be0" /><rect x="9" width="7" height="14" rx="1" fill="#f3f8fc" /><rect y="8" width="8" height="6" fill="#155a96" /></svg></button>
      </div>
    </footer>
  );
}

const menus = ["File", "Edit", "View", "Project", "Enterprise", "Tools", "Admin", "Help"];
const status: [string, string][] = [
  ["", "w-[52px]"], ["Portfolio: All Projects", "w-[76px]"], ["Access Mode: Shared", "w-[85px]"], ["Data Date: 01-Jan-26", "w-[99px]"], ["Baseline: Current Project", "w-[88px]"], ["User: admin", "w-[52px]"], ["DB: PMDB (Professional)", "w-[100px]"],
];

export default function App() {
  return (
    <div className="relative flex min-h-screen flex-col overflow-hidden border-2 border-r-1 border-b-1 border-[#e01818] bg-white font-['Liberation_Sans','DejaVu_Sans',sans-serif] text-[8px] text-[#1a1a1a]">
      <header className="flex h-[14px] shrink-0 items-center text-gray-400">
        <svg viewBox="0 0 12 12" className="size-[11px]"><rect width="12" height="12" fill="#e81414" /><rect x="2" y="4" width="8" height="4" rx="2" fill="none" stroke="#fff" strokeWidth="1.400" /></svg>
        <h1 className="ml-[2px] flex-1">Primavera P6 Professional 17 : PROJECT 1 (عمارة سكنية)</h1>
        <button aria-label="Minimize"><Minus className="size-2" /></button>
        <button aria-label="Restore" className="mx-[22px]"><Copy className="size-[7px] -scale-y-100" /></button>
        <button aria-label="Close" className="mr-[13px]"><X className="size-[9px]" /></button>
      </header>
      <nav className="flex h-[17px] shrink-0 items-center gap-[7px] border-b border-gray-400 pl-[9px] text-[8px]">
        {menus.map((m) => (
          <button key={m}>{m === "Enterprise" ? <>E<u>n</u>terprise</> : <><u>{m[0]}</u>{m.slice(1)}</>}</button>
        ))}
        <span className="mt-1 mr-1 ml-auto size-[2px] bg-black" />
      </nav>
      <div role="toolbar" className="flex h-[19px] shrink-0 items-center border-b border-gray-400 pl-[2px]">
        {toolGroups.map((g, i) => (
          <React.Fragment key={i}>
            <span className="mr-[2px] h-4 border-l border-dotted border-gray-400" />
            {g.items.map(([n, s], j) => <Tool key={j} name={n} active={s === "on"} menu={s === "menu"} />)}
            <span className={`flex h-3 shrink-0 items-end ${g.end}`}><span className="ml-[2px] size-[2px] bg-black" /></span>
          </React.Fragment>
        ))}
      </div>
      <div role="toolbar" className="flex h-[18px] shrink-0 items-center pl-[2px]">
        <span className="mr-[2px] h-4 border-l border-dotted border-gray-400" />
        {["importb", "exportb", "importg", "exportr"].map((n) => <Tool key={n} name={n} />)}
        <span className="mt-2 ml-[2px] size-[2px] bg-black" />
      </div>
      <div className="flex flex-1">
        <SideBar groups={leftTools} label="Directories" />
        <main className="flex min-w-0 flex-1 flex-col border-2 border-r-4 border-[#dde3e8] bg-[#d7d7d7] pb-1">
          <div className="flex h-4 shrink-0 items-center justify-between bg-[#f8f8f8] pr-1 pl-[3px]">
            <h2 className="text-[9px] font-bold text-black">Activities</h2>
            <button aria-label="Close view" className="flex size-2 items-center justify-center bg-[#b84a50] text-[6px] leading-none text-white">×</button>
          </div>
          <section className="mt-[3px] mr-px ml-[3px] flex h-[244px] shrink-0 flex-col border border-gray-400 bg-[#efefef]">
            <div className="flex h-[12px] shrink-0 items-center border-b border-gray-400 text-[7px]">
              <button className="flex w-[227px] items-center gap-[3px] self-stretch border-r border-gray-400 pl-[7px]">
                <svg viewBox="0 0 6 4" className="h-1 w-[6px]"><path d="M0 .500l3 3 3-3" fill="none" stroke="#555" /></svg>
                Layout: Classic Schedule Layout
              </button>
              <span className="pl-[2px]">Filter: All Activities</span>
            </div>
            <div className="flex h-[220px]">
              <div className="shrink-0 overflow-hidden"><ActivitiesTable /></div>
              <div className="mx-[6px] w-[3px] shrink-0 border-x border-gray-300" />
              <Gantt />
              <div className="flex w-[11px] shrink-0 items-end justify-center pb-7"><span className="h-[11px] w-px bg-gray-500" /></div>
            </div>
            <div className="flex flex-1 items-center justify-between pr-[22px] pl-3"><span className="h-px w-[11px] bg-gray-500" /><span className="h-px w-[11px] bg-gray-500" /></div>
          </section>
          <div className="h-[5px] shrink-0" />
          <Details />
        </main>
        <SideBar groups={rightTools} label="Commands" />
      </div>
      <div role="status" className="flex h-[13px] shrink-0 items-center border-t border-gray-300 bg-[#f0f0f0] pl-[63px] text-[7px]">
        {status.map(([t, w], i) => (
          <span key={i} className={`h-[10px] border-t border-l border-gray-400 pl-px leading-[9px] whitespace-nowrap ${w}`}>{t}</span>
        ))}
      </div>
      <Taskbar />
      <AssignDialog />
    </div>
  );
}
